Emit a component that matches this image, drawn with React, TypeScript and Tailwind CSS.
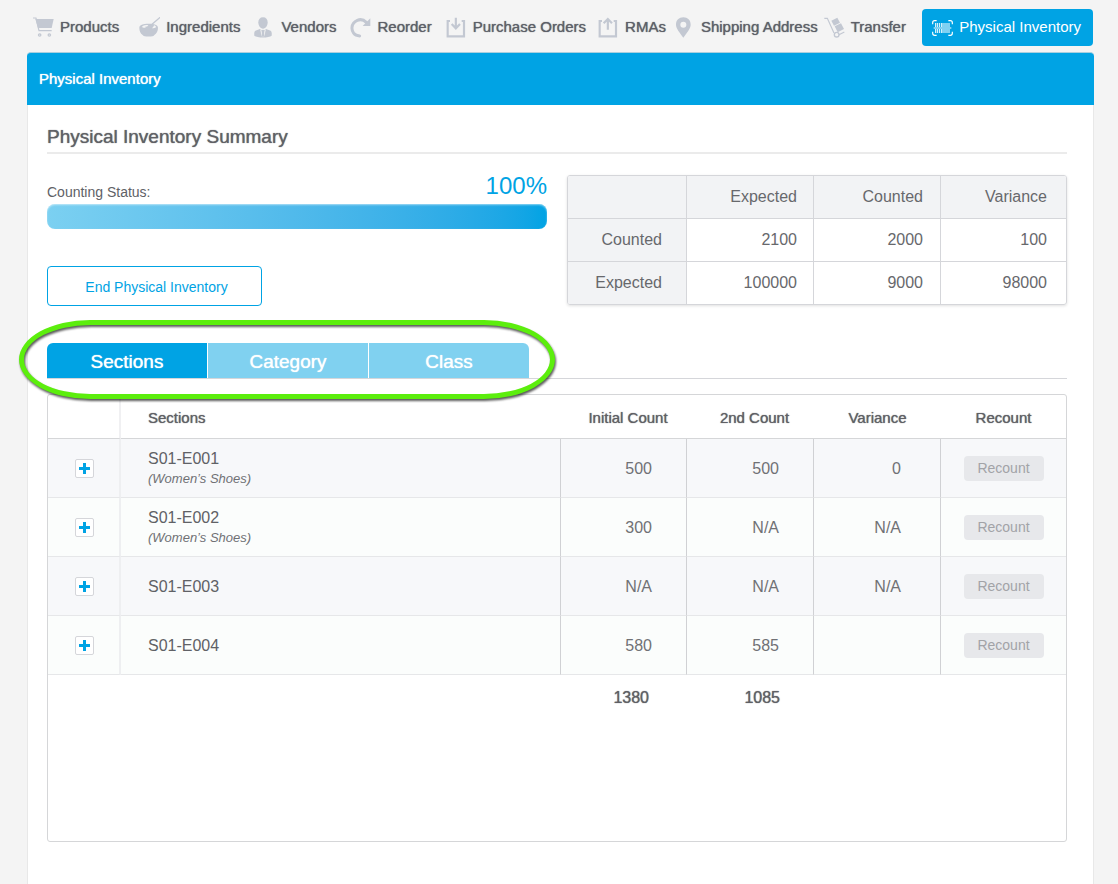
import type { ReactNode } from "react";

const medium = "[text-shadow:0_0_1px_currentColor]";

function Icon({ children }: { children: ReactNode }) {
  return (
    <svg viewBox="0 0 63 63" className="size-[21px] shrink-0 text-[#c3c8d2]" fill="currentColor" aria-hidden="true">
      {children}
    </svg>
  );
}

const CartIcon = () => (
  <Icon>
    <path d="M0 3h9l9 38h38" fill="none" stroke="currentColor" strokeWidth="3.5" />
    <path d="M7 6h55l-6 27H15z" />
    <circle cx="20" cy="54" r="5.5" />
    <circle cx="49" cy="54" r="5.5" />
    <circle cx="20" cy="54" r="1.5" fill="#f4f4f4" />
    <circle cx="49" cy="54" r="1.5" fill="#f4f4f4" />
  </Icon>
);

const BowlIcon = () => (
  <Icon>
    <path d="M1 32C1 24 12 20 29 20s28 4 28 12c0 9-4 17-11 22-1 6-33 6-35 0C4 49 1 41 1 32z" />
    <path d="M9 29c4-4 11-5 19-5l-4 5c-4-1-6 1-4 3-5 1-10 0-11-3zM45 25c4 1 6 3 6 5-2 3-7 4-12 4 3-3 5-5 6-9z" fill="#f4f4f4" />
    <path d="M62 2 40 21l-10 12" fill="none" stroke="currentColor" strokeWidth="4" strokeLinecap="round" />
  </Icon>
);

const PersonIcon = () => (
  <Icon>
    <path d="M27 1c9 0 14 6 14 15 0 10-6 19-14 19s-14-9-14-19C13 7 18 1 27 1z" />
    <path d="M18 36c4 5 14 5 18 0l14 5c3 2 4 8 3 15-8 7-44 7-52 0-1-7 0-13 3-15z" />
    <path d="m20 38 6 20h-2zM34 38l-6 20h2z" fill="#f4f4f4" stroke="#f4f4f4" strokeWidth="1.5" />
    <path d="m24 40 3-2 3 2-1 4 2 12-4 5-4-5 2-12z" />
  </Icon>
);

const ReorderIcon = () => (
  <Icon>
    <path d="M29 57C12 56 5 44 6 31 8 12 32-1 49 16" fill="none" stroke="currentColor" strokeWidth="9" strokeLinecap="round" />
    <path d="M61 4v23H38z" />
  </Icon>
);

const TrayIcon = ({ up = false }: { up?: boolean }) => (
  <Icon>
    <g fill="none" stroke="currentColor" strokeWidth="6.5">
      <path d="M12 12H5v46h49V12h-7" />
      {up ? <path d="M29.500 38V6M17 19 29.500 6 42 19" /> : <path d="M29.500 2v32M17 21l12.500 13L42 21" />}
    </g>
  </Icon>
);

const PinIcon = () => (
  <Icon>
    <path fillRule="evenodd" d="M28 1c13 0 22 9 22 22 0 12-12 24-22 39C18 47 6 35 6 23 6 10 15 1 28 1zm0 13a9 9 0 1 0 0 18 9 9 0 0 0 0-18z" />
  </Icon>
);

const DollyIcon = () => (
  <Icon>
    <path d="M1 4h9l20 44M45 53l16-8" fill="none" stroke="currentColor" strokeWidth="3.5" />
    <path d="m22 11 18-9 8 15-18 9zM32 28l19-9 9 17-19 10z" />
    <circle cx="38" cy="53" r="7" fill="none" stroke="currentColor" strokeWidth="4" />
  </Icon>
);

const BarcodeIcon = () => (
  <svg viewBox="0 0 63 48" className="h-4 w-[21px] shrink-0" fill="none" stroke="white" aria-hidden="true">
    <path d="M14 2H8q-6 0-6 6v5M49 2h6q6 0 6 6v5M14 46H8q-6 0-6-6v-5M49 46h6q6 0 6-6v-5" strokeWidth="3.5" />
    <path d="M11 9v12M16 9v12M22 9v12M28 9v12M33 9v12M39 9v12M45 9v12M51 9v12M11 27v12M16 27v12M22 27v12M28 27v12M33 27v12M39 27v12M45 27v12M51 27v12" strokeWidth="3" />
    <path d="M5 24h53" strokeWidth="3" />
  </svg>
);

const navItems: { label: string; icon: ReactNode; space: string }[] = [
  { label: "Products", icon: <CartIcon />, space: "mr-5" },
  { label: "Ingredients", icon: <BowlIcon />, space: "mr-3.5" },
  { label: "Vendors", icon: <PersonIcon />, space: "mr-3.5" },
  { label: "Reorder", icon: <ReorderIcon />, space: "mr-3.5" },
  { label: "Purchase Orders", icon: <TrayIcon />, space: "mr-3" },
  { label: "RMAs", icon: <TrayIcon up />, space: "mr-2" },
  { label: "Shipping Address", icon: <PinIcon />, space: "mr-1.5" },
  { label: "Transfer", icon: <DollyIcon />, space: "mr-2" },
];

const summary = [
  { label: "Counted", values: ["2100", "2000", "100"] },
  { label: "Expected", values: ["100000", "9000", "98000"] },
];

const sections = [
  { name: "S01-E001", note: "(Women’s Shoes)", first: "500", second: "500", variance: "0" },
  { name: "S01-E002", note: "(Women’s Shoes)", first: "300", second: "N/A", variance: "N/A" },
  { name: "S01-E003", note: "", first: "N/A", second: "N/A", variance: "N/A" },
  { name: "S01-E004", note: "", first: "580", second: "585", variance: "" },
];

function TopNav() {
  return (
    <nav className="flex h-[52px] items-center pt-[3px] pr-[25px] pl-[33px] whitespace-nowrap">
      {navItems.map((item) => (
        <a key={item.label} href="#" className={`flex items-center gap-1.5 text-[15px] text-[#5d6068] ${item.space}`}>
          {item.icon}
          <span className={medium}>{item.label}</span>
        </a>
      ))}
      <a href="#" className="ml-auto flex h-[37px] items-center gap-1.5 rounded bg-[#00a3e4] pr-3 pl-2.5 text-[15px] text-white">
        <BarcodeIcon />
        Physical Inventory
      </a>
    </nav>
  );
}

function SummaryTable() {
  return (
    <div className="overflow-hidden rounded-[3px] border border-[#d5d6da] shadow-[0_1px_3px_rgba(0,0,0,0.12)]">
      <table className="w-full table-fixed border-separate border-spacing-0 text-right text-base text-[#67686c]">
        <colgroup>
          <col className="w-[119px]" />
          <col />
          <col className="w-[127px]" />
          <col className="w-[125px]" />
        </colgroup>
        <thead>
          <tr className="h-[43px] bg-[#f2f3f5]">
            <td className="border-r border-b border-[#d5d6da]" />
            <th scope="col" className="border-r border-b border-[#d5d6da] pr-4 font-normal">Expected</th>
            <th scope="col" className="border-r border-b border-[#d5d6da] pr-[17px] font-normal">Counted</th>
            <th scope="col" className="border-b border-[#d5d6da] pr-[19px] font-normal">Variance</th>
          </tr>
        </thead>
        <tbody>
          {summary.map((row, i) => {
            const line = i === 0 ? "border-b" : "";
            return (
              <tr key={row.label} className={i === 0 ? "h-[43px]" : "h-[42px]"}>
                <th scope="row" className={`border-r border-[#d5d6da] bg-[#f2f3f5] pr-6 font-normal ${line}`}>{row.label}</th>
                <td className={`border-r border-[#d5d6da] pr-4 ${line}`}>{row.values[0]}</td>
                <td className={`border-r border-[#d5d6da] pr-[17px] ${line}`}>{row.values[1]}</td>
                <td className={`border-[#d5d6da] pr-[19px] ${line}`}>{row.values[2]}</td>
              </tr>
            );
          })}
        </tbody>
      </table>
    </div>
  );
}

function Tabs() {
  const tab = `h-[35px] w-40 pt-0.5 text-[19px] leading-none text-white ${medium}`;
  return (
    <div className="relative mt-[37px] border-b border-[#d5d6da]">
      <div role="tablist" className="flex gap-px">
        <button type="button" role="tab" aria-selected="true" className={`rounded-tl-md bg-[#00a3e4] ${tab}`}>Sections</button>
        <button type="button" role="tab" aria-selected="false" className={`bg-[#80d1f0] ${tab}`}>Category</button>
        <button type="button" role="tab" aria-selected="false" className={`rounded-tr-md bg-[#80d1f0] ${tab}`}>Class</button>
      </div>
      <div className="pointer-events-none absolute -top-[23px] -left-7 z-10 h-[79px] w-[536px] rounded-[72px/40px] border-[5px] border-[#5cee0d] drop-shadow-[1px_2px_1px_rgba(0,0,0,0.65)]" />
    </div>
  );
}

function SectionsTable() {
  const count = "border-r border-b border-r-[#d0d1d4] border-b-[#e6e7e9] pt-0.5 text-right";
  return (
    <div className="mt-[15px] min-h-[448px] overflow-hidden rounded-[3px] border border-[#d5d6d8]">
      <table className="w-full table-fixed border-separate border-spacing-0 text-[#707175]">
        <colgroup>
          <col className="w-[73px]" />
          <col />
          <col className="w-[126px]" />
          <col className="w-[127px]" />
          <col className="w-[127px]" />
          <col className="w-[125px]" />
        </colgroup>
        <thead>
          <tr className={`h-11 text-[15px] text-[#5f6065] ${medium}`}>
            <td className="border-r-2 border-b border-r-[#f0f0f2] border-b-[#d5d6d8]" />
            <th scope="col" className="border-b border-[#d5d6d8] pt-1 pl-[27px] text-left font-normal">Sections</th>
            <th scope="col" className="border-b border-[#d5d6d8] pt-1 pl-2 font-normal">Initial Count</th>
            <th scope="col" className="border-b border-[#d5d6d8] pt-1 pl-2 font-normal">2nd Count</th>
            <th scope="col" className="border-b border-[#d5d6d8] pt-1 font-normal">Variance</th>
            <th scope="col" className="border-b border-[#d5d6d8] pt-1 font-normal">Recount</th>
          </tr>
        </thead>
        <tbody>
          {sections.map((row) => (
            <tr key={row.name} className="h-[59px] odd:bg-[#f7f8fa] even:bg-[#fbfdfc]">
              <td className="border-r-2 border-b border-r-[#eeeff1] border-b-[#e6e7e9] pl-0.5">
                <button type="button" aria-label={`Expand ${row.name}`} className="mx-auto flex size-[19px] items-center justify-center rounded-[2px] border border-[#d5d6da] bg-white">
                  <svg viewBox="0 0 11 11" className="size-[11px]" fill="#00a3e4" aria-hidden="true">
                    <path d="M4 0h3v4h4v3H7v4H4V7H0V4h4z" />
                  </svg>
                </button>
              </td>
              <th scope="row" className="border-r border-b border-r-[#d0d1d4] border-b-[#e6e7e9] pt-0.5 pl-[27px] text-left font-normal">
                <div className="text-base leading-5 text-[#606166]">{row.name}</div>
                {row.note && <div className="text-[13px] leading-5 italic">{row.note}</div>}
              </th>
              <td className={`pr-[34px] ${count}`}>{row.first}</td>
              <td className={`pr-[34px] ${count}`}>{row.second}</td>
              <td className={`pr-[39px] ${count}`}>{row.variance}</td>
              <td className="border-b border-[#e6e7e9] text-center">
                <button type="button" className="h-[25px] w-20 rounded bg-[#e7e8eb] text-sm text-[#a2a3a7]">Recount</button>
              </td>
            </tr>
          ))}
        </tbody>
        <tfoot>
          <tr className={`h-[45px] text-base text-[#5f6065] ${medium}`}>
            <td colSpan={2} />
            <td className="pr-[38px] text-right">1380</td>
            <td className="pr-[34px] text-right">1085</td>
            <td colSpan={2} />
          </tr>
        </tfoot>
      </table>
    </div>
  );
}

export default function App() {
  return (
    <div className="flex min-h-screen flex-col bg-[#f4f4f4] font-['Liberation_Sans',Arial,sans-serif]">
      <TopNav />
      <main className="mr-6 ml-[27px] flex-1">
        <h1 className={`flex h-[53px] items-center rounded-t border-t border-[#a9cfdf] bg-[#00a3e4] px-3 text-[15px] text-white ${medium}`}>
          Physical Inventory
        </h1>
        <div className="min-h-[779px] border-x border-[#e8e8e8] bg-white pt-5 pr-[26px] pb-10 pl-[19px]">
          <h2 className={`border-b-2 border-[#ebebeb] pb-[3px] text-[19px] leading-6 text-[#606166] ${medium}`}>
            Physical Inventory Summary
          </h2>
          <div className="mt-[21px] grid grid-cols-2 items-start gap-5">
            <div>
              <div className="flex h-[29px] items-end justify-between">
                <span id="counting" className="text-sm leading-6 text-[#606166]">Counting Status:</span>
                <span className="pb-1 text-2xl leading-7 text-[#00a3e4]">100%</span>
              </div>
              <div role="progressbar" aria-labelledby="counting" aria-valuenow={100} className="h-[25px] rounded-lg bg-linear-to-r from-[#7bd0f1] to-[#00a3e4] shadow-[inset_0_1px_2px_rgba(255,255,255,0.55)]" />
              <button type="button" className="mt-[37px] h-10 w-[215px] rounded border border-[#00a3e4] bg-white pt-px pl-1 text-sm text-[#00a3e4]">
                End Physical Inventory
              </button>
            </div>
            <SummaryTable />
          </div>
          <Tabs />
          <SectionsTable />
        </div>
      </main>
    </div>
  );
}
